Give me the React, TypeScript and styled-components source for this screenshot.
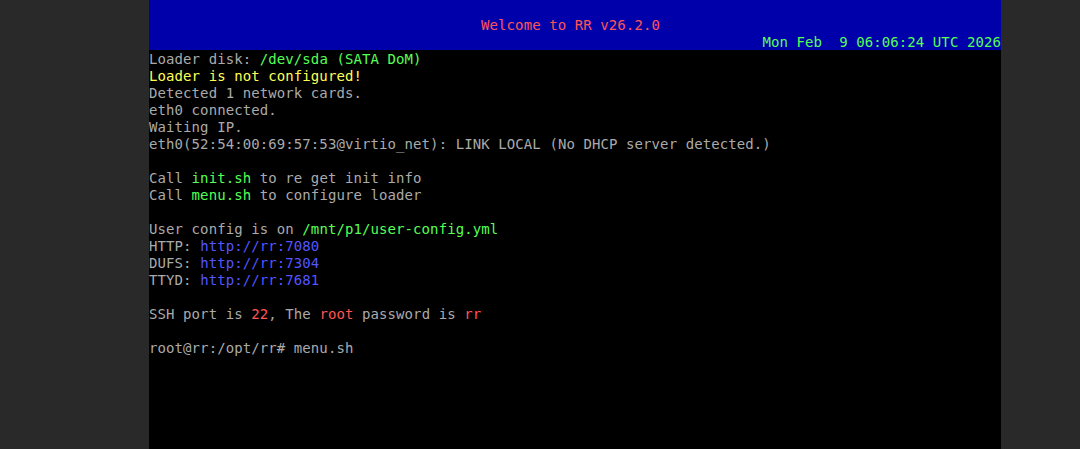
import styled, { createGlobalStyle } from 'styled-components';

const GlobalStyle = createGlobalStyle`
  html, body {
    margin: 0;
    padding: 0;
    background: #292929;
  }
`;

const palette = {
  gray: '#aaaaaa',
  yellow: '#ffff55',
  green: '#55ff55',
  blue: '#5555ff',
  red: '#ff5555',
};

type Tone = keyof typeof palette;

const Page = styled.div`
  display: flex;
  flex-direction: row;
  height: 449px;
  padding-left: 149px;
  overflow: hidden;
`;

const Screen = styled.div`
  width: 852px;
  height: 449px;
  background: #000000;
  display: flex;
  flex-direction: column;

  font-family: 'DejaVu Sans Mono', 'Liberation Mono', monospace;
  font-size: 14px;
  letter-spacing: 0.09px;
  line-height: 17px;
  color: ${palette.gray};
  white-space: pre;
`;

const Header = styled.div`
  flex: none;
  height: 50px;
  background: #0000aa;
  display: flex;
  flex-direction: column;
  padding-top: 17px;
  box-sizing: border-box;
`;

const Title = styled.div`
  flex: none;
  height: 17px;
  padding-right: 9px;
  text-align: center;
  color: ${palette.red};
`;

const Clock = styled.div`
  flex: none;
  height: 17px;
  text-align: right;
  color: ${palette.green};
`;

const Body = styled.div`
  display: flex;
  flex-direction: column;
  padding-top: 1px;
`;

const Line = styled.div`
  height: 17px;
`;

const Ink = styled.span<{ $tone: Tone }>`
  color: ${(props) => palette[props.$tone]};
`;

function App() {
  return (
    <>
      <GlobalStyle />
      <Page>
        <Screen>
          <Header>
            <Title>Welcome to RR v26.2.0</Title>
            <Clock>Mon Feb  9 06:06:24 UTC 2026</Clock>
          </Header>
          <Body>
            <Line>
              Loader disk: <Ink $tone="green">/dev/sda (SATA DoM)</Ink>
            </Line>
            <Line>
              <Ink $tone="yellow">Loader is not configured!</Ink>
            </Line>
            <Line>Detected 1 network cards.</Line>
            <Line>eth0 connected.</Line>
            <Line>Waiting IP.</Line>
            <Line>eth0(52:54:00:69:57:53@virtio_net): LINK LOCAL (No DHCP server detected.)</Line>
            <Line />
            <Line>
              Call <Ink $tone="green">init.sh</Ink> to re get init info
            </Line>
            <Line>
              Call <Ink $tone="green">menu.sh</Ink> to configure loader
            </Line>
            <Line />
            <Line>
              User config is on <Ink $tone="green">/mnt/p1/user-config.yml</Ink>
            </Line>
            <Line>
              HTTP: <Ink $tone="blue">http://rr:7080</Ink>
            </Line>
            <Line>
              DUFS: <Ink $tone="blue">http://rr:7304</Ink>
            </Line>
            <Line>
              TTYD: <Ink $tone="blue">http://rr:7681</Ink>
            </Line>
            <Line />
            <Line>
              SSH port is <Ink $tone="red">22</Ink>, The <Ink $tone="red">root</Ink> password is{' '}
              <Ink $tone="red">rr</Ink>
            </Line>
            <Line />
            <Line>root@rr:/opt/rr# menu.sh</Line>
          </Body>
        </Screen>
      </Page>
    </>
  );
}

export default App;
